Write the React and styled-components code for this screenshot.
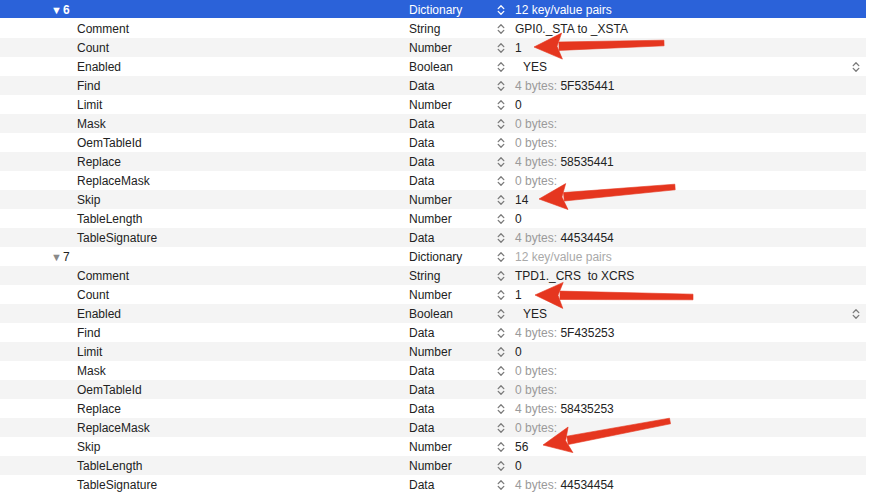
import React from 'react';
import styled, {createGlobalStyle} from 'styled-components';

const GlobalStyle = createGlobalStyle`
  html, body {
    margin: 0;
    padding: 0;
    background: #ffffff;
  }
  body {
    font-family: "Liberation Sans", Arial, sans-serif;
    font-size: 12px;
    color: #222222;
  }
`;

const group = (n, comment, count, find, replace, skip, summaryDim) => ([
  {kind: 'head', key: n, type: 'Dictionary', value: '12 key/value pairs', dim: summaryDim},
  {key: 'Comment', type: 'String', value: comment},
  {key: 'Count', type: 'Number', value: count},
  {key: 'Enabled', type: 'Boolean', value: 'YES', popup: true},
  {key: 'Find', type: 'Data', bytes: 4, value: find},
  {key: 'Limit', type: 'Number', value: '0'},
  {key: 'Mask', type: 'Data', bytes: 0},
  {key: 'OemTableId', type: 'Data', bytes: 0},
  {key: 'Replace', type: 'Data', bytes: 4, value: replace},
  {key: 'ReplaceMask', type: 'Data', bytes: 0},
  {key: 'Skip', type: 'Number', value: skip},
  {key: 'TableLength', type: 'Number', value: '0'},
  {key: 'TableSignature', type: 'Data', bytes: 4, value: '44534454'},
]);

const rows = [
  ...group('6', 'GPI0._STA to _XSTA', '1', '5F535441', '58535441', '14', false),
  ...group('7', 'TPD1._CRS\u00a0 to XCRS', '1', '5F435253', '58435253', '56', true),
];

const arrows = [
  {tip: [534, 47], tail: [664, 43]},
  {tip: [539, 199], tail: [675, 187]},
  {tip: [535, 295], tail: [693, 297]},
  {tip: [543, 445], tail: [670, 421]},
];

const Stepper = ({color = '#7a7a7a'}) => (
  <svg width="8" height="12" viewBox="0 0 8 12">
    <path d="M1.2 4.6 L4 1.8 L6.8 4.6" fill="none" stroke={color} strokeWidth="1.3" strokeLinecap="round" strokeLinejoin="round"/>
    <path d="M1.2 7.4 L4 10.2 L6.8 7.4" fill="none" stroke={color} strokeWidth="1.3" strokeLinecap="round" strokeLinejoin="round"/>
  </svg>
);

// red annotation arrow, head at tip, tapered shaft towards tail
const Arrow = ({tip, tail}) => {
  const dx = tail[0] - tip[0];
  const dy = tail[1] - tip[1];
  const len = Math.hypot(dx, dy);
  const ux = dx / len, uy = dy / len;
  const nx = -uy, ny = ux;
  const headLen = 30, headW = 13;
  const bx = tip[0] + ux * headLen, by = tip[1] + uy * headLen;
  const head = [
    [tip[0], tip[1]],
    [bx + nx * headW - ux * 2, by + ny * headW - uy * 2],
    [bx - ux * 7, by - uy * 7],
    [bx - nx * headW - ux * 2, by - ny * headW - uy * 2],
  ];
  const w0 = 4.2, w1 = 2.8;
  const shaft = [
    [bx - ux * 5 + nx * w0, by - uy * 5 + ny * w0],
    [tail[0] + nx * w1, tail[1] + ny * w1],
    [tail[0] - nx * w1, tail[1] - ny * w1],
    [bx - ux * 5 - nx * w0, by - uy * 5 - ny * w0],
  ];
  const pts = (p) => p.map(([x, y]) => `${x.toFixed(1)},${y.toFixed(1)}`).join(' ');
  return (
    <g>
      <polygon points={pts(shaft)} fill="#e5361f" stroke="#e5361f" strokeWidth="0.6" strokeLinejoin="round"/>
      <polygon points={pts(head)} fill="#e5361f" stroke="#e5361f" strokeWidth="0.6" strokeLinejoin="round"/>
    </g>
  );
};

export default function App() {
  return (
    <Page>
      <GlobalStyle/>
      <Table>
        {rows.map((r, i) => {
          const selected = i === 0;
          const head = r.kind === 'head';
          return (
            <Row key={i} $striped={i % 2 === 0} $selected={selected}>
              <KeyCell $level={head ? 0 : 1} $bold={selected}>
                {head ? <Disclosure $selected={selected}>{'\u25BC'}</Disclosure> : null}
                {r.key}
              </KeyCell>
              <TypeCell>{r.type}</TypeCell>
              <ValueCell>
                <Stepper color={selected ? '#ffffff' : '#7a7a7a'}/>
                {r.bytes !== undefined ? (
                  <Value>
                    <Dim>{r.bytes} bytes:</Dim>{r.value ? ' ' + r.value : ''}
                  </Value>
                ) : (
                  <Value $dim={r.dim} $popup={r.popup}>{r.value}</Value>
                )}
                {r.popup ? <PopupStepper><Stepper/></PopupStepper> : null}
              </ValueCell>
            </Row>
          );
        })}
      </Table>
      <Overlay width="869" height="494" viewBox="0 0 869 494">
        {arrows.map((a, i) => <Arrow key={i} {...a}/>)}
      </Overlay>
    </Page>
  );
}

const Page = styled.div`
  position: relative;
  width: 869px;
  height: 494px;
  overflow: hidden;
  background: #ffffff;
`;

const Table = styled.div`
  display: flex;
  flex-direction: column;
  width: 866px;
`;

const Row = styled.div`
  display: grid;
  grid-template-columns: 409px 88px 1fr;
  align-items: center;
  height: 19px;
  background: ${p => p.$selected ? '#2b62d9' : (p.$striped ? '#f4f4f4' : '#ffffff')};
  color: ${p => p.$selected ? '#ffffff' : '#222222'};
  box-shadow: ${p => p.$selected ? 'inset 0 -1px 0 #ffffff' : 'none'};
`;

const KeyCell = styled.div`
  display: flex;
  align-items: center;
  padding-left: ${p => p.$level === 0 ? '51px' : '77px'};
  font-weight: ${p => p.$bold ? 700 : 400};
  white-space: nowrap;
`;

const Disclosure = styled.span`
  font-size: 11px;
  margin-right: 1px;
  color: ${p => p.$selected ? '#ffffff' : '#8a8a8a'};
`;

const TypeCell = styled.div`
  white-space: nowrap;
`;

const ValueCell = styled.div`
  display: flex;
  align-items: center;
  gap: 10px;
  position: relative;
  height: 100%;
  white-space: nowrap;
  svg {
    flex: none;
  }
`;

const Value = styled.span`
  color: ${p => p.$dim ? '#a9a9a9' : 'inherit'};
  padding-left: ${p => p.$popup ? '8px' : '0'};
`;

const Dim = styled.span`
  color: #9a9a9a;
`;

const PopupStepper = styled.span`
  display: flex;
  margin-left: auto;
  margin-right: 6px;
`;

const Overlay = styled.svg`
  position: absolute;
  left: 0;
  top: 0;
  pointer-events: none;
`;
